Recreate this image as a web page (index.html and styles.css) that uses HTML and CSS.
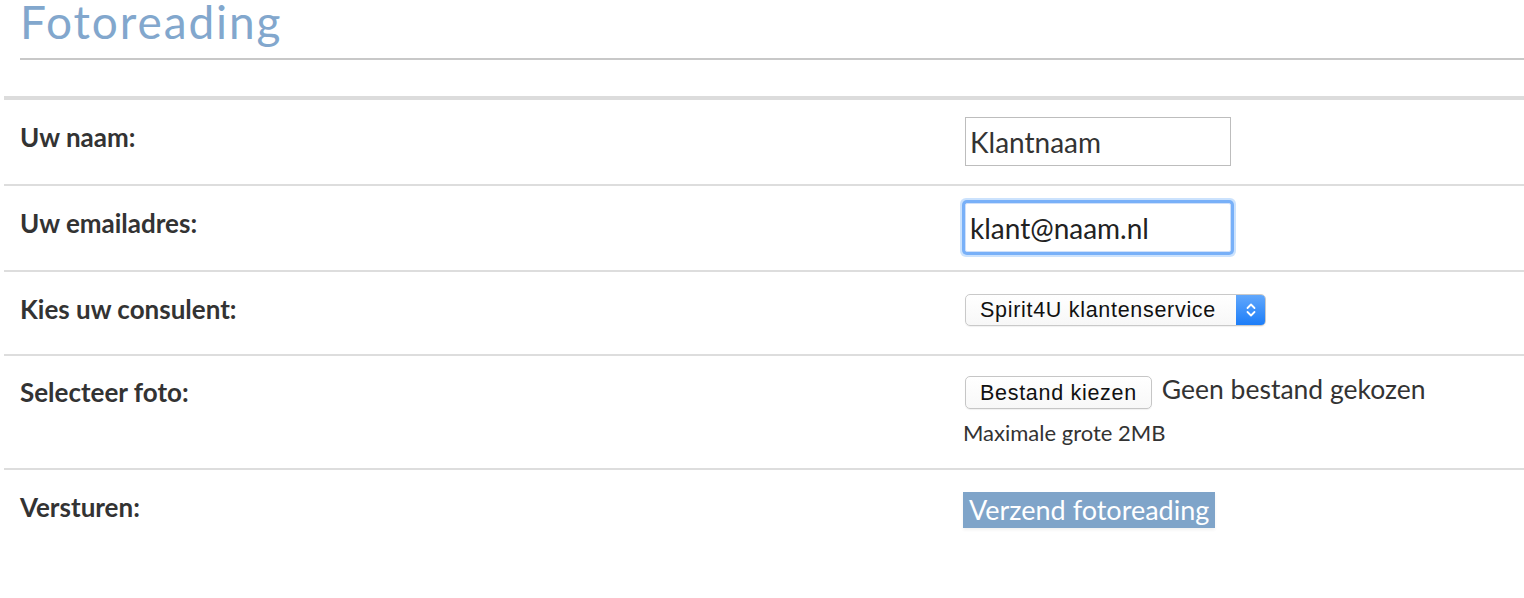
FILE: index.html
```html
<!DOCTYPE html>
<html lang="nl">
<head>
<meta charset="utf-8">
<title>Fotoreading</title>
<link rel="stylesheet" href="styles.css">
</head>
<body>
<div class="page">
  <header class="head">
    <h1 class="title">Fotoreading</h1>
  </header>
  <form class="form">
    <div class="row">
      <div class="label">Uw naam:</div>
      <div class="value"><input class="text" type="text" value="Klantnaam"></div>
    </div>
    <div class="row">
      <div class="label">Uw emailadres:</div>
      <div class="value"><input class="text focus" type="text" value="klant@naam.nl"></div>
    </div>
    <div class="row">
      <div class="label">Kies uw consulent:</div>
      <div class="value">
        <div class="select">
          <span class="select-text">Spirit4U klantenservice</span>
          <span class="select-arrow">
            <svg width="12" height="20" viewBox="0 0 12 20"><path d="M2.5 8 L6 4.5 L9.5 8 M2.5 12 L6 15.5 L9.5 12" fill="none" stroke="#fff" stroke-width="1.8" stroke-linecap="round" stroke-linejoin="round"/></svg>
          </span>
        </div>
      </div>
    </div>
    <div class="row row-file">
      <div class="label">Selecteer foto:</div>
      <div class="value">
        <div class="file">
          <span class="file-btn">Bestand kiezen</span>
          <span class="file-name">Geen bestand gekozen</span>
        </div>
        <div class="hint">Maximale grote 2MB</div>
      </div>
    </div>
    <div class="row row-last">
      <div class="label">Versturen:</div>
      <div class="value"><span class="submit">Verzend fotoreading</span></div>
    </div>
  </form>
</div>
</body>
</html>
```
FILE: styles.css
```css
html, body {
  margin: 0;
  padding: 0;
  background: #fff;
  overflow: hidden;
}
body {
  font-family: "Lato", "Noto Sans", sans-serif;
  color: #333;
}
.page {
  width: 1560px;
}
.head {
  margin-left: 20px;
  border-bottom: 2px solid #c8c8c8;
  height: 58px;
}
.title {
  margin: 0;
  font-family: "Lato", "Liberation Sans", sans-serif;
  font-weight: 400;
  font-size: 46px;
  line-height: 44px;
  color: #82a7cd;
  letter-spacing: 1.9px;
}
.form {
  margin: 36px 0 0 4px;
  border-top: 4px solid #dcdcdc;
}
.row {
  display: grid;
  grid-template-columns: 959px 1fr;
  align-items: start;
  border-bottom: 2px solid #dddddd;
  padding: 17px 0 18px;
}
.row-last {
  border-bottom: none;
}
.label {
  padding-left: 16px;
  min-height: 47px;
  font-family: "Lato", sans-serif;
  font-weight: 700;
  font-size: 26px;
  line-height: 40px;
  color: #333;
}
.value {
  display: flex;
  flex-direction: column;
  align-items: flex-start;
}
.text {
  margin: 0 0 0 2px;
  width: 266px;
  height: 49px;
  box-sizing: border-box;
  border: 1px solid #bdbdbd;
  padding: 0 4px;
  font-family: "Lato", sans-serif;
  font-size: 28px;
  color: #333;
  background: #fff;
  outline: none;
}
.text.focus {
  border: 1px solid #cfe0fa;
  box-shadow: 0 0 0 3px #78b0f8, 0 0 0 5px rgba(140, 190, 250, 0.45);
  border-radius: 2px;
  color: #222;
}
.select {
  margin: 5px 0 0 2px;
  width: 301px;
  height: 32px;
  box-sizing: border-box;
  border: 1px solid #c9c9c9;
  border-radius: 5px;
  display: flex;
  align-items: stretch;
  overflow: hidden;
  background: linear-gradient(#fff, #f7f7f7);
  box-shadow: 0 1px 1px rgba(0,0,0,0.06);
}
.select-text {
  flex: 1;
  padding-left: 14px;
  font-family: "Liberation Sans", Arial, sans-serif;
  font-size: 21.5px;
  letter-spacing: 0.7px;
  line-height: 30px;
  color: #111;
}
.select-arrow {
  width: 30px;
  display: flex;
  align-items: center;
  justify-content: center;
  background: linear-gradient(#64a9fc, #1a7cf8);
  margin: -1px -1px -1px 0;
}
.row-file {
  padding-top: 20px;
  padding-bottom: 22px;
}
.row-file .label {
  margin-top: -4px;
}
.file {
  display: flex;
  align-items: center;
  margin-left: 2px;
}
.file-btn {
  display: inline-block;
  height: 33px;
  box-sizing: border-box;
  padding: 0 14px;
  border: 1px solid #c6c6c6;
  border-radius: 5px;
  background: linear-gradient(#fff, #f8f8f8);
  font-family: "Liberation Sans", Arial, sans-serif;
  font-size: 21.5px;
  letter-spacing: 0.7px;
  line-height: 33px;
  color: #111;
  box-shadow: 0 1px 1px rgba(0,0,0,0.06);
}
.file-name {
  margin-left: 10px;
  margin-top: -8px;
  font-family: "Lato", sans-serif;
  font-size: 26.5px;
  color: #333;
}
.hint {
  margin-top: 10px;
  font-family: "Lato", sans-serif;
  font-size: 22px;
  color: #333;
}
.submit {
  margin-top: 5px;
  display: inline-block;
  background: #7fa4c9;
  color: #fff;
  font-family: "Lato", sans-serif;
  font-size: 27px;
  line-height: 36px;
  padding: 0 6px;
  box-shadow: 0 2px 3px rgba(0,0,0,0.06);
}
```
